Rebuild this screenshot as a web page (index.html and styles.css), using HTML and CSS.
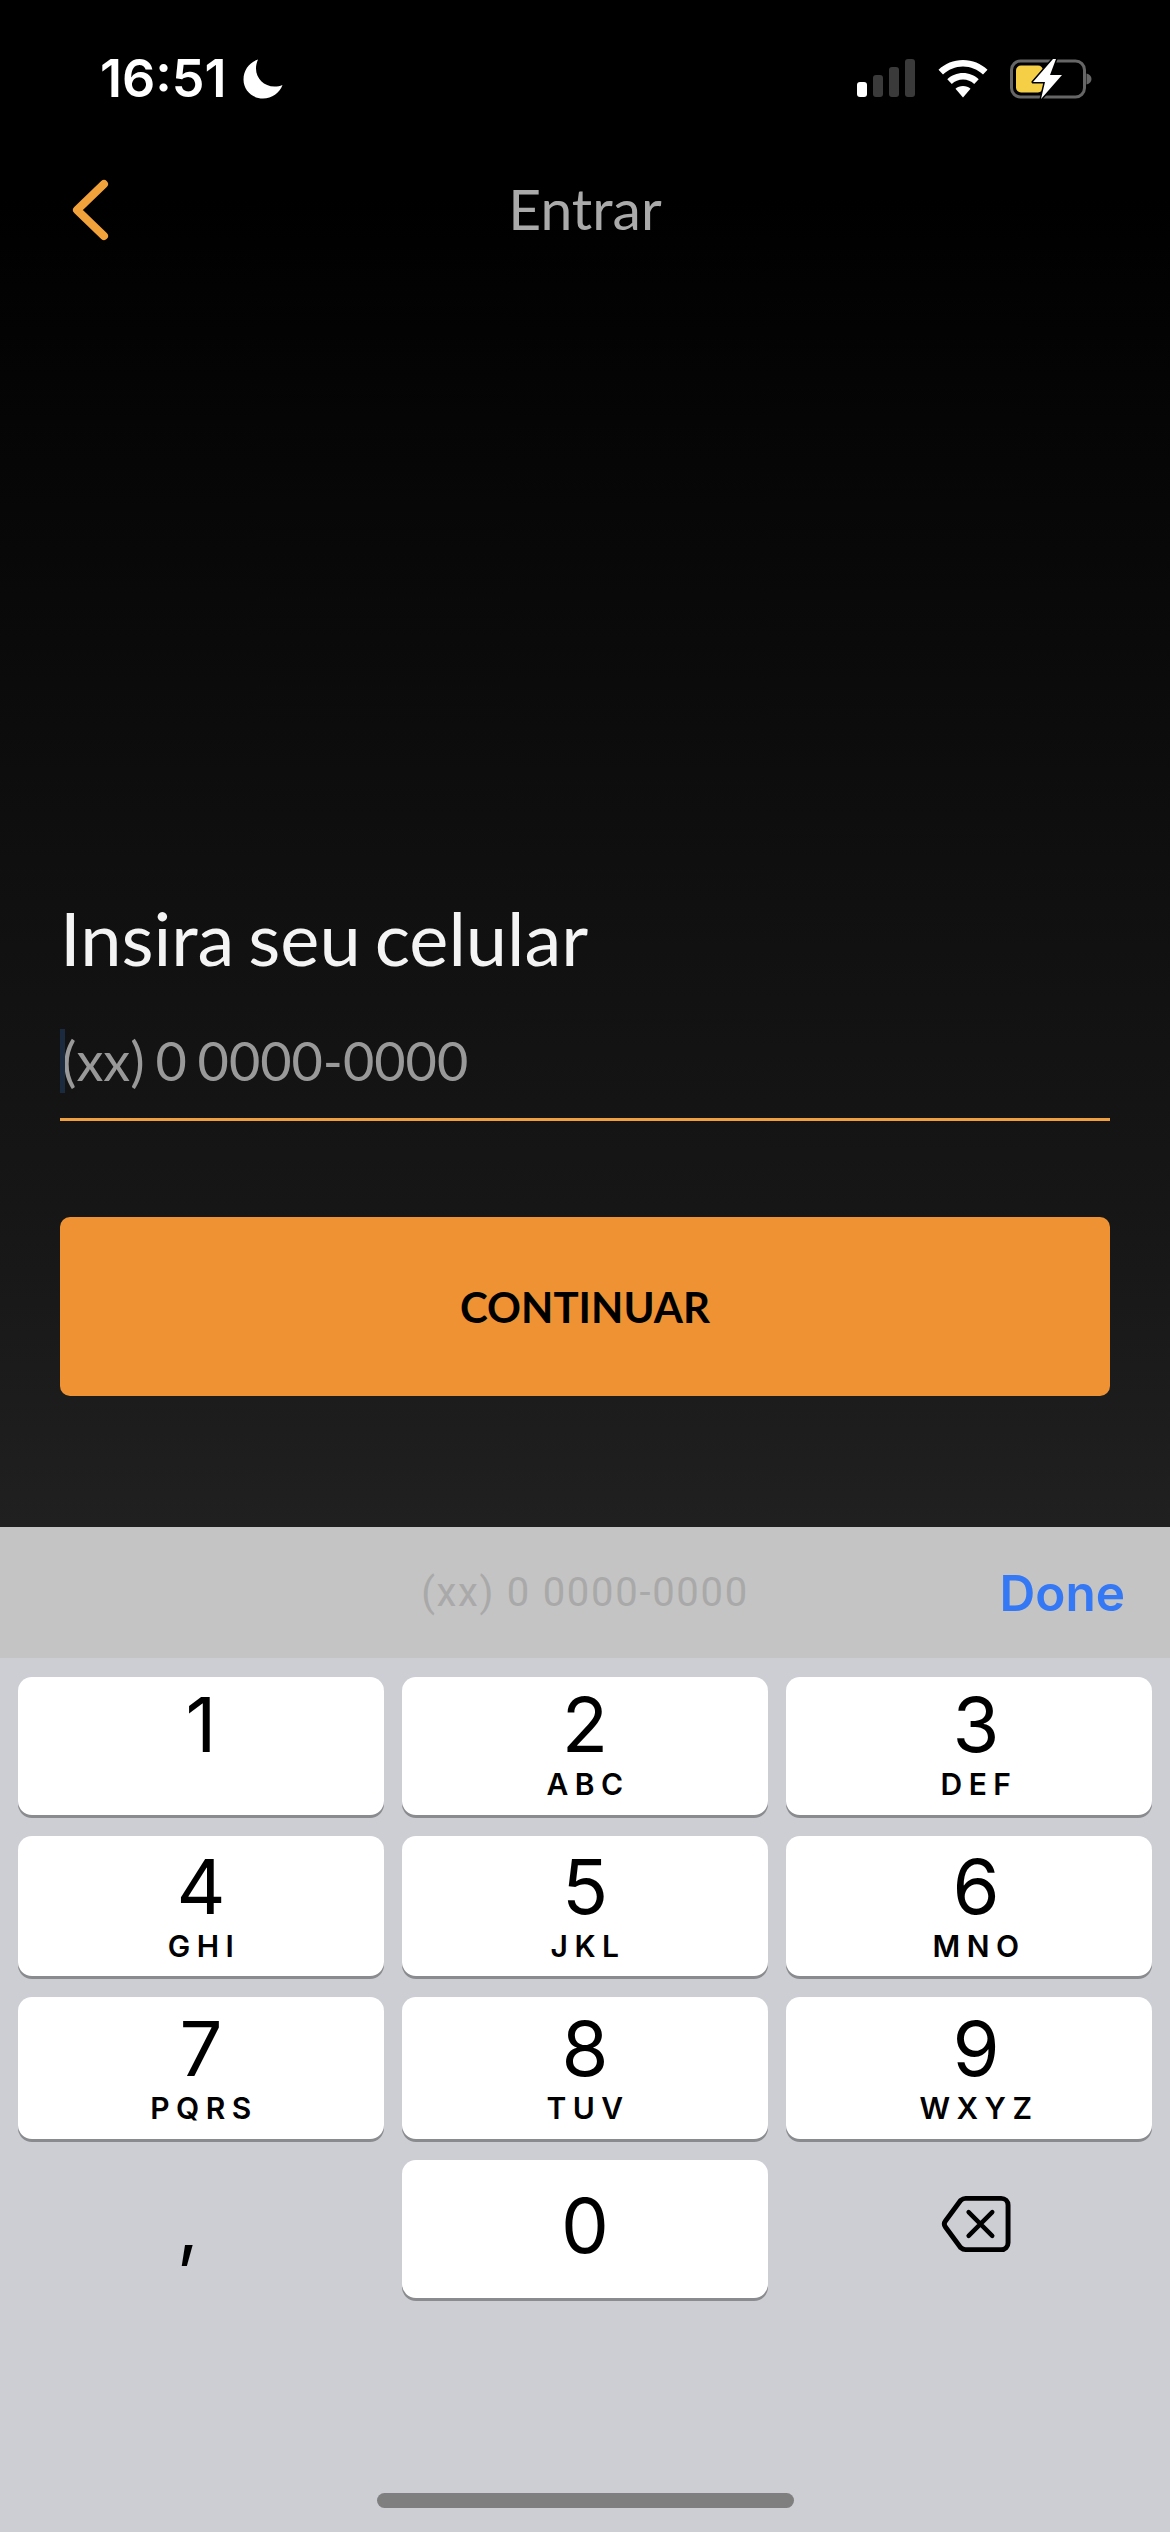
FILE: index.html
```html
<!DOCTYPE html>
<html lang="pt-BR">
<head>
<meta charset="utf-8">
<title>Entrar</title>
<link rel="stylesheet" href="styles.css">
</head>
<body>
<main class="phone">
  <section class="screen">
    <header class="status">
      <div class="status-left">
        <span class="time">16:51</span>
        <svg class="moon" viewBox="0 0 40 40"><path d="M15 0.500C6.500 3.500 0.500 11 0.500 20.500C0.500 31 9 39.500 20 39.500C29 39.500 36.500 34 39.500 26C37 27 34.500 27.500 31.500 27.500C21 27.500 13 19.500 13 9.500C13 6.500 13.700 3.300 15 0.500Z" fill="#fff"/></svg>
      </div>
      <div class="status-right">
        <svg class="signal" viewBox="0 0 58 38">
          <rect x="0" y="23" width="10" height="15" rx="3" fill="#fff"/>
          <rect x="16" y="16" width="10" height="22" rx="3" fill="#3a3a3a"/>
          <rect x="32" y="8" width="10" height="30" rx="3" fill="#3a3a3a"/>
          <rect x="48" y="0" width="10" height="38" rx="3" fill="#3a3a3a"/>
        </svg>
        <svg class="wifi" viewBox="0 0 50 38">
          <path d="M25 0C15.500 0 7 3.700 0.500 9.700L5 14.500C10.300 9.500 17.300 6.500 25 6.500C32.700 6.500 39.700 9.500 45 14.500L49.500 9.700C43 3.700 34.500 0 25 0Z" fill="#fff"/>
          <path d="M25 13C19 13 13.500 15.300 9.300 19.200L13.800 24C16.800 21.300 20.700 19.600 25 19.600C29.300 19.600 33.200 21.300 36.200 24L40.700 19.200C36.500 15.300 31 13 25 13Z" fill="#fff"/>
          <path d="M25 26C22 26 19.500 27 17.500 28.800L25 37.500L32.500 28.800C30.500 27 28 26 25 26Z" fill="#fff"/>
        </svg>
        <svg class="battery" viewBox="0 0 82 40">
          <rect x="1.500" y="2" width="73" height="36" rx="9" fill="none" stroke="#666" stroke-width="3"/>
          <rect x="6" y="6.500" width="27" height="27" rx="5" fill="#f5cf45"/>
          <path d="M76.500 14.500C79.500 15.200 81.500 17.300 81.500 20C81.500 22.700 79.500 24.800 76.500 25.500Z" fill="#666"/>
          <path d="M43 0L23 23H35L31 40L52 16H40L46 0Z" fill="#fff" stroke="#000" stroke-width="3" stroke-linejoin="round" paint-order="stroke"/>
        </svg>
      </div>
    </header>
    <nav class="topbar">
      <svg class="back" viewBox="0 0 40 62"><path d="M34 5L7 31L34 57" fill="none" stroke="#f2a23b" stroke-width="8" stroke-linecap="round" stroke-linejoin="round"/></svg>
      <h1 class="nav-title">Entrar</h1>
    </nav>
    <form class="login">
      <label class="field-label">Insira seu celular</label>
      <div class="field">
        <span class="caret"></span>
        <span class="placeholder">(xx) 0 0000-0000</span>
      </div>
      <div class="primary">CONTINUAR</div>
    </form>
  </section>
  <div class="accessory">
    <span class="accessory-hint">(xx) 0 0000-0000</span>
    <span class="done">Done</span>
  </div>
  <section class="keyboard">
    <div class="keys">
      <div class="key"><span class="num">1</span><span class="abc"></span></div>
      <div class="key"><span class="num">2</span><span class="abc">ABC</span></div>
      <div class="key"><span class="num">3</span><span class="abc">DEF</span></div>
      <div class="key"><span class="num">4</span><span class="abc">GHI</span></div>
      <div class="key"><span class="num">5</span><span class="abc">JKL</span></div>
      <div class="key"><span class="num">6</span><span class="abc">MNO</span></div>
      <div class="key"><span class="num">7</span><span class="abc">PQRS</span></div>
      <div class="key"><span class="num">8</span><span class="abc">TUV</span></div>
      <div class="key"><span class="num">9</span><span class="abc">WXYZ</span></div>
      <div class="key key-plain"><span class="comma">,</span></div>
      <div class="key key-zero"><span class="num">0</span></div>
      <div class="key key-plain">
        <svg class="delete" viewBox="0 0 72 60"><path d="M25 4H61C65 4 68 7 68 11V49C68 53 65 56 61 56H25C23 56 21.500 55.300 20 54L4.500 33C3 31 3 29 4.500 27L20 6C21.500 4.700 23 4 25 4Z" fill="none" stroke="#000" stroke-width="5" stroke-linejoin="round"/><path d="M28 18L52 42M52 18L28 42" fill="none" stroke="#000" stroke-width="4.500" stroke-linecap="round"/></svg>
      </div>
    </div>
    <div class="home-bar"></div>
  </section>
</main>
</body>
</html>
```
FILE: styles.css
```css
* { box-sizing: border-box; }
html, body { margin: 0; padding: 0; }
body { width: 1170px; height: 2532px; overflow: hidden; font-family: "Inter", "Liberation Sans", sans-serif; }
.phone { display: flex; flex-direction: column; width: 1170px; height: 2532px; }
.screen {
  height: 1527px;
  padding-bottom: 131px;
  display: flex;
  flex-direction: column;
  background: linear-gradient(180deg, #000 0%, #000 13%, #111 62%, #161616 79%, #202020 100%);
}
.status { height: 156px; padding: 57px 78px 0 100px; display: flex; justify-content: space-between; align-items: flex-start; }
.status-left { display: flex; align-items: center; gap: 16px; height: 44px; }
.time { color: #fff; font-size: 52px; font-weight: 600; line-height: 44px; }
.moon { width: 40px; height: 40px; }
.status-right { display: flex; align-items: flex-start; }
.signal { width: 58px; height: 38px; margin-top: 2px; }
.wifi { width: 50px; height: 38px; margin: 3px 0 0 23px; }
.battery { width: 82px; height: 40px; margin: 2px 0 0 22px; }
.topbar { height: 108px; padding-left: 70px; position: relative; display: flex; align-items: center; }
.back { width: 40px; height: 62px; }
.nav-title { position: absolute; left: 0; right: 0; top: 0; margin: 0; text-align: center; color: #aaa; font: 400 57px/104px "Lato", sans-serif; }
.login { margin-top: auto; padding: 0 60px; display: flex; flex-direction: column; }
.field-label { color: #f4f4f4; font: 400 74px/90px "Lato", sans-serif; word-spacing: -5px; }
.field { position: relative; height: 92px; margin-top: 46px; border-bottom: 3px solid #f0a040; }
.caret { position: absolute; left: 0; top: 0; width: 5px; height: 64px; background: #1c2a40; }
.placeholder { display: block; color: #999; font: 400 54px/64px "Lato", sans-serif; word-spacing: -3px; padding-left: 2px; }
.primary { margin-top: 96px; height: 179px; border-radius: 10px; background: #ee9234; color: #000; display: flex; align-items: center; justify-content: center; font: 700 42px/1 "Lato", sans-serif; }
.accessory { height: 131px; background: #c4c4c4; position: relative; display: flex; align-items: center; justify-content: flex-end; padding-right: 48px; }
.accessory-hint { position: absolute; left: 0; right: 0; text-align: center; color: #a9a9a9; font: 400 40px/1 "Roboto", sans-serif; letter-spacing: 1.700px; }
.done { color: #3478f6; font-size: 49.500px; font-weight: 600; margin-right: -3px; }
.keyboard { flex: 1; background: #cdced3; display: flex; flex-direction: column; padding-top: 19px; }
.keys { display: grid; grid-template-columns: repeat(3, 366px); grid-template-rows: 138px 140px 142px 138px; gap: 21px 18px; padding: 0 18px; }
.key { background: #fff; border-radius: 14px; box-shadow: 0 3px 0 #8a8b8f; display: flex; flex-direction: column; align-items: center; justify-content: center; color: #000; padding-bottom: 5px; }
.key:nth-child(-n+3) { padding-bottom: 8px; }
.key:nth-child(3n) { padding-left: 14px; }
.num { font-size: 76px; font-weight: 400; line-height: 84px; }
.abc { font-size: 30px; font-weight: 600; letter-spacing: 6.500px; line-height: 36px; height: 36px; margin-right: -6px; }
.key-plain { background: transparent; box-shadow: none; }
.key-zero { padding-bottom: 8px; }
.comma { font-size: 76px; line-height: 84px; margin: 0 26px 3px 0; }
.delete { width: 71px; height: 60px; margin-top: -5px; }
.home-bar { width: 417px; height: 15px; border-radius: 8px; background: #7f7f7f; margin: auto auto 24px; }
```
